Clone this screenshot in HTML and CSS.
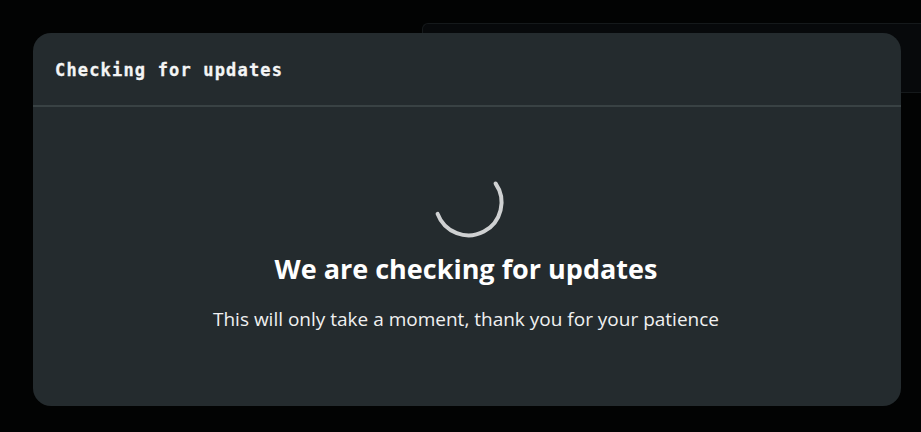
FILE: index.html
```html
<!DOCTYPE html>
<html>
<head>
<meta charset="utf-8">
<link rel="stylesheet" href="styles.css">
</head>
<body>
<div class="stage">
  <div class="backpanel"></div>
  <div class="modal">
    <div class="modal-header">
      <h2 class="modal-title">Checking for updates</h2>
    </div>
    <div class="modal-body">
      <svg class="spinner" width="80" height="80" viewBox="0 0 80 80">
        <path d="M 67.6 22.5 A 33 33 0 1 1 9.6 52.9" fill="none" stroke="#cfd1d2" stroke-width="4" stroke-linecap="round"/>
      </svg>
      <h1 class="heading">We are checking for updates</h1>
      <p class="sub">This will only take a moment, thank you for your patience</p>
    </div>
  </div>
</div>
</body>
</html>
```
FILE: styles.css
```css
html, body {
  margin: 0;
  padding: 0;
  background: #020303;
  width: 921px;
  height: 432px;
  overflow: hidden;
}
.stage {
  position: relative;
  width: 921px;
  height: 432px;
  padding: 33px 0 0 33px;
  box-sizing: border-box;
  overflow: hidden;
}
.backpanel {
  position: absolute;
  left: 422px;
  top: 23px;
  right: -10px;
  height: 68px;
  background: #07090b;
  border-top: 1px solid #15191b;
  border-left: 1px solid #15191b;
  border-bottom: 1px solid #15191b;
  border-top-left-radius: 6px;
}
.modal {
  position: relative;
  width: 868px;
  height: 373px;
  background: #242b2e;
  border-radius: 18px;
  display: flex;
  flex-direction: column;
}
.modal-header {
  height: 72px;
  border-bottom: 2px solid #394244;
  display: flex;
  align-items: center;
  padding: 0 22px;
}
.modal-title {
  margin: 0;
  font-family: "DejaVu Sans Mono", "Liberation Mono", monospace;
  font-weight: bold;
  font-size: 17px;
  letter-spacing: 1.17px;
  color: #f4f5f5;
  padding-top: 2px;
  -webkit-text-stroke: 0.3px #f4f5f5;
}
.modal-body {
  flex: 1;
  display: flex;
  flex-direction: column;
  align-items: center;
  padding-top: 54px;
  padding-right: 2px;
}
.spinner {
  display: block;
  margin-left: 4px;
}
.heading {
  margin: 10px 0 0;
  font-family: "Open Sans", sans-serif;
  font-weight: 700;
  font-size: 27px;
  line-height: 36px;
  color: #ffffff;
}
.sub {
  margin: 19px 0 0;
  font-family: "Open Sans", sans-serif;
  font-size: 19px;
  line-height: 26px;
  color: #f0f1f1;
}
```
